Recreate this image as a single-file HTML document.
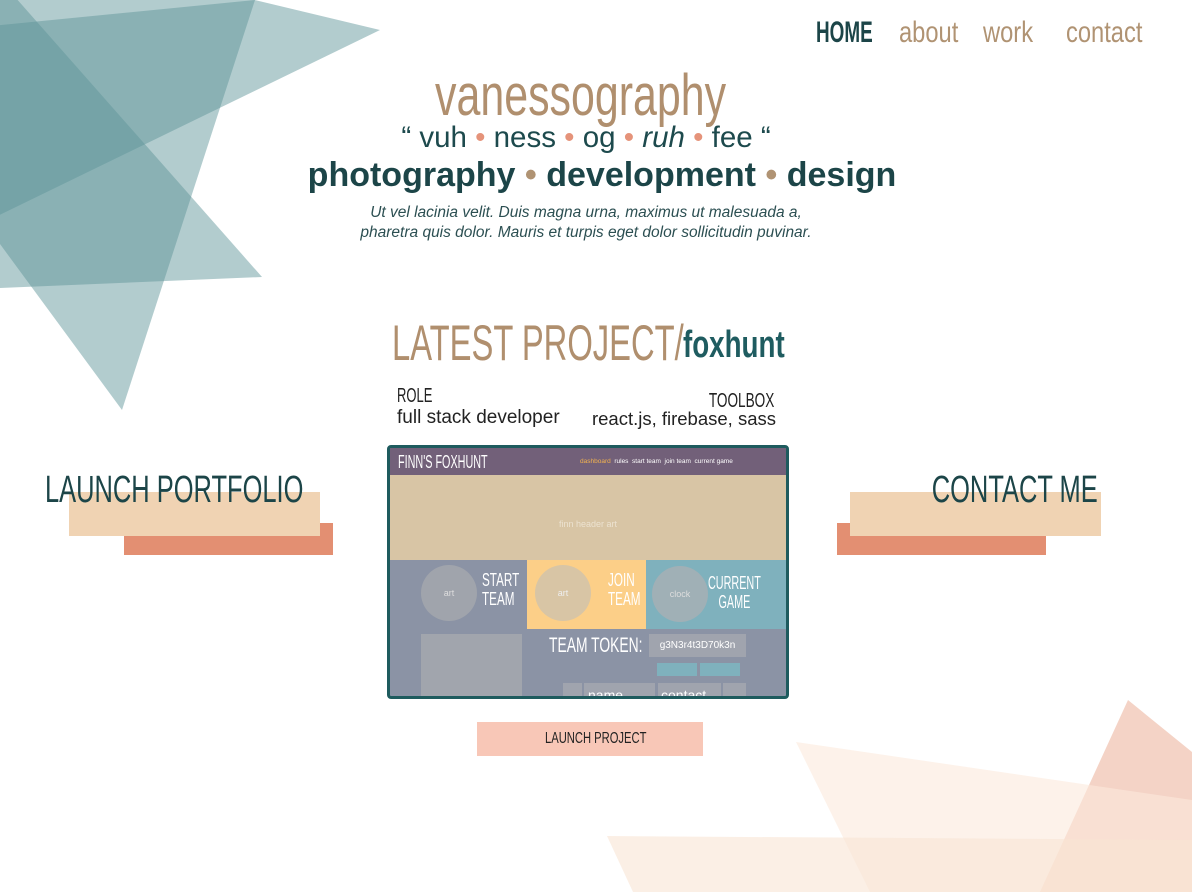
<!DOCTYPE html>
<html><head><meta charset="utf-8"><style>
*{margin:0;padding:0;box-sizing:border-box}
body{width:1192px;height:892px;overflow:hidden;background:#fff;position:relative;font-family:"Liberation Sans",sans-serif}
.a{position:absolute;white-space:nowrap}
.n{transform-origin:left top}
.r{transform-origin:right top}
svg{position:absolute;left:0;top:0}
</style></head><body>
<svg width="1192" height="892">
<g fill="#5e9498" fill-opacity="0.48">
<polygon points="-50,-73 380,30 -50,239"/>
<polygon points="-150,40 255,0 122,410"/>
<polygon points="0,-20 262,277 0,288"/>
</g>
<polygon points="1128,700 1192,752 1192,892 1040,892" fill="#f4d3c6"/>
<polygon points="796,742 1192,800 1192,892 870,892" fill="#fbe9dc" fill-opacity="0.6"/>
<polygon points="607,836 1192,840 1192,892 633,892" fill="#f8e4d4" fill-opacity="0.6"/>
</svg>

<div class="a n" style="left:816px;top:16px;font-size:30px;font-weight:bold;color:#1c4548;transform:scaleX(0.63)">HOME</div>
<div class="a n" style="left:899px;top:16px;font-size:30px;color:#b09373;transform:scaleX(0.79)">about</div>
<div class="a n" style="left:983px;top:16px;font-size:30px;color:#b09373;transform:scaleX(0.79)">work</div>
<div class="a n" style="left:1066px;top:16px;font-size:30px;color:#b09373;transform:scaleX(0.79)">contact</div>

<div class="a n" style="left:435px;top:62px;font-size:58px;color:#b08f6e;transform:scaleX(0.74)">vanessography</div>
<div class="a" style="left:0;width:1172px;text-align:center;top:121px;font-size:29.5px;color:#1d4a4d">“ vuh <span style="color:#e5937a">•</span> ness <span style="color:#e5937a">•</span> og <span style="color:#e5937a">•</span> <i>ruh</i> <span style="color:#e5937a">•</span> fee “</div>
<div class="a" style="left:0;width:1204px;text-align:center;top:156px;font-size:34px;font-weight:bold;color:#1c4548">photography <span style="color:#b09373">•</span> development <span style="color:#b09373">•</span> design</div>
<div class="a" style="left:0;width:1172px;text-align:center;top:203px;font-size:15.5px;line-height:20px;font-style:italic;color:#2c4f52">Ut vel lacinia velit. Duis magna urna, maximus ut malesuada a,<br>pharetra quis dolor. Mauris et turpis eget dolor sollicitudin puvinar.</div>

<div class="a n" style="left:392px;top:314px;font-size:50px;color:#b08f6e;transform:scaleX(0.655)">LATEST PROJECT/</div>
<div class="a n" style="left:683px;top:324px;font-size:38px;color:#1f5c60;font-weight:bold;transform:scaleX(0.73)">foxhunt</div>
<div class="a n" style="left:397px;top:385px;font-size:20px;color:#222;transform:scaleX(0.65)">ROLE</div>
<div class="a" style="left:397px;top:407px;font-size:19px;color:#222">full stack developer</div>
<div class="a r" style="right:418px;top:390px;font-size:20px;color:#222;transform:scaleX(0.68)">TOOLBOX</div>
<div class="a" style="right:416px;top:408px;font-size:18.5px;color:#222">react.js, firebase, sass</div>

<div class="a" style="left:387px;top:445px;width:402px;height:254px;border:3px solid #1e5b5e;border-radius:4px;overflow:hidden;background:#8b93a5">
 <div class="a" style="left:0;top:0;width:396px;height:27px;background:#726079"></div>
 <div class="a n" style="left:8px;top:4px;font-size:18px;color:#fff;transform:scaleX(0.6)">FINN'S FOXHUNT</div>
 <div class="a" style="left:190px;top:10px;font-size:6.5px;color:#fff"><span style="color:#f2b24f">dashboard</span>&nbsp; rules&nbsp; start team&nbsp; join team&nbsp; current game</div>
 <div class="a" style="left:0;top:27px;width:396px;height:85px;background:#d8c5a5"></div>
 <div class="a" style="left:0;top:71px;width:396px;text-align:center;font-size:9px;color:#ece2d0">finn header art</div>
 <div class="a" style="left:137px;top:112px;width:119px;height:69px;background:#fccf88"></div>
 <div class="a" style="left:256px;top:112px;width:140px;height:69px;background:#7fb1bd"></div>
 <div class="a" style="left:31px;top:117px;width:56px;height:56px;border-radius:50%;background:#a0a4ac;color:#ddd;font-size:9px;text-align:center;line-height:56px">art</div>
 <div class="a" style="left:145px;top:117px;width:56px;height:56px;border-radius:50%;background:#d8c5a5;color:#eee;font-size:9px;text-align:center;line-height:56px">art</div>
 <div class="a" style="left:262px;top:118px;width:56px;height:56px;border-radius:50%;background:#a0b0b6;color:#ddd;font-size:9px;text-align:center;line-height:56px">clock</div>
 <div class="a n" style="left:92px;top:123px;font-size:18px;line-height:19px;color:#fff;transform:scaleX(0.65)">START<br>TEAM</div>
 <div class="a n" style="left:218px;top:123px;font-size:18px;line-height:19px;color:#fff;transform:scaleX(0.65)">JOIN<br>TEAM</div>
 <div class="a n" style="left:318px;top:126px;font-size:18px;line-height:19px;color:#fff;text-align:center;transform:scaleX(0.6)">CURRENT<br>GAME</div>
 <div class="a" style="left:31px;top:186px;width:101px;height:70px;background:#a1a5ad"></div>
 <div class="a n" style="left:159px;top:186px;font-size:21px;color:#fff;transform:scaleX(0.66)">TEAM TOKEN:</div>
 <div class="a" style="left:259px;top:186px;width:97px;height:23px;background:#a0a4ae;color:#fff;font-size:10px;text-align:center;line-height:23px">g3N3r4t3D70k3n</div>
 <div class="a" style="left:267px;top:215px;width:40px;height:13px;background:#7fb1bd"></div>
 <div class="a" style="left:310px;top:215px;width:40px;height:13px;background:#7fb1bd"></div>
 <div class="a" style="left:173px;top:235px;width:19px;height:20px;background:#a0a4ae"></div>
 <div class="a" style="left:194px;top:235px;width:71px;height:20px;background:#a0a4ae;color:#fff;font-size:14px;padding-left:4px;line-height:24px">name</div>
 <div class="a" style="left:268px;top:235px;width:63px;height:20px;background:#a0a4ae;color:#fff;font-size:14px;padding-left:3px;line-height:24px">contact</div>
 <div class="a" style="left:333px;top:235px;width:23px;height:20px;background:#a0a4ae"></div>
</div>

<div class="a" style="left:124px;top:523px;width:209px;height:32px;background:#e38f72"></div>
<div class="a" style="left:69px;top:492px;width:251px;height:44px;background:#f0d3b3"></div>
<div class="a n" style="left:45px;top:469px;font-size:38px;color:#1c4548;transform:scaleX(0.67)">LAUNCH PORTFOLIO</div>
<div class="a" style="left:837px;top:523px;width:209px;height:32px;background:#e38f72"></div>
<div class="a" style="left:850px;top:492px;width:251px;height:44px;background:#f0d3b3"></div>
<div class="a r" style="right:94px;top:469px;font-size:38px;color:#1c4548;transform:scaleX(0.67)">CONTACT ME</div>

<div class="a" style="left:477px;top:722px;width:226px;height:34px;background:#f8c7b7"></div>
<div class="a n" style="left:545px;top:730px;font-size:16px;color:#222;transform:scaleX(0.7)">LAUNCH PROJECT</div>
</body></html>
